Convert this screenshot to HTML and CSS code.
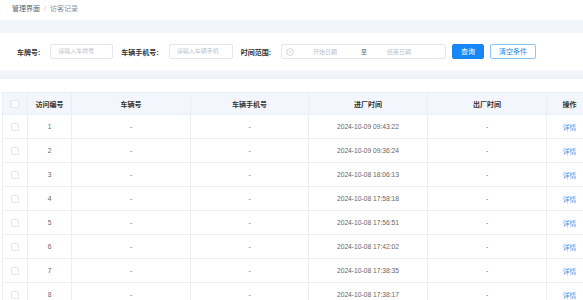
FILE: index.html
```html
<!doctype html>
<html>
<head>
<meta charset="utf-8">
<title>访客记录</title>
<link rel="stylesheet" href="styles.css">
</head>
<body>

<div class="crumb">
    <span class="crumb-item">管理界面</span><span class="crumb-sep">/</span><span class="crumb-item cur">访客记录</span>
</div>

<div class="band band-top"></div>

<div class="search">
    <label class="lab">车牌号:</label>
    <div class="ipt ipt-plate">请输入车牌号</div>
    <label class="lab">车辆手机号:</label>
    <div class="ipt ipt-phone">请输入车辆手机</div>
    <label class="lab">时间范围:</label>
    <div class="range">
        <svg class="clock" width="8" height="8" viewBox="0 0 10 10"><circle cx="5" cy="5" r="4.2" fill="none" stroke="#c0c4cc" stroke-width="0.9"/><path d="M5 2.6V5l1.6 1" fill="none" stroke="#c0c4cc" stroke-width="0.9"/></svg>
        <span class="range-txt">开始日期</span>
        <span class="range-sep">至</span>
        <span class="range-txt">结束日期</span>
    </div>
    <button class="btn btn-primary">查询</button>
    <button class="btn btn-plain">清空条件</button>
</div>

<div class="band band-bottom"></div>

<div class="table-wrap">
    <table class="grid">
        <colgroup>
            <col style="width:25px"><col style="width:44px"><col style="width:119px"><col style="width:118px"><col style="width:119px"><col style="width:119px"><col style="width:46px">
        </colgroup>
        <thead>
            <tr>
                <th><span class="chk"></span></th>
                <th>访问编号</th>
                <th>车辆号</th>
                <th>车辆手机号</th>
                <th>进厂时间</th>
                <th>出厂时间</th>
                <th>操作</th>
            </tr>
        </thead>
        <tbody id="rows"></tbody>
    </table>
</div>

<script>
var times = ['2024-10-09 09:43:22','2024-10-09 09:36:24','2024-10-08 18:06:13','2024-10-08 17:58:18','2024-10-08 17:56:51','2024-10-08 17:42:02','2024-10-08 17:38:35','2024-10-08 17:38:17'];
var html = '';
for (var i = 0; i < times.length; i++) {
    html += '<tr><td><span class="chk"></span></td><td>' + (i + 1) + '</td><td>-</td><td>-</td><td>' + times[i] + '</td><td>-</td><td><a class="link">详情</a></td></tr>';
}
document.getElementById('rows').innerHTML = html;
</script>

</body>
</html>
```

FILE: styles.css
```css
*{ margin: 0; padding: 0; box-sizing: border-box; }
html, body{ width: 583px; height: 300px; overflow: hidden; background: #fff; }
body{ font-family: "Liberation Sans", Arial, "Noto Sans CJK SC", sans-serif; font-size: 7px; color: #606266; }

/* 面包屑 */
.crumb{ height: 20px; padding: 4px 0 0 12px; font-size: 7px; line-height: 9px; color: #606266; }
.crumb-sep{ margin: 0 4px; color: #c0c4cc; }
.crumb .cur{ color: #8a8f99; }

.band{ background: #f2f6fb; }
.band-top{ height: 13px; }
.band-bottom{ height: 9px; background: linear-gradient(#f4f7fb, #edf2f8); }

/* 搜索区 */
.search{ height: 37px; display: flex; align-items: center; padding-left: 17px; }
.lab{ font-weight: bold; color: #333; font-size: 7px; margin-right: 10px; }
.ipt{ height: 15px; border: 1px solid #e4e7ed; border-radius: 2px; padding-left: 7px; font-size: 6px; line-height: 13px; color: #c0c4cc; margin-right: 8px; }
.ipt-plate{ width: 63px; }
.ipt-phone{ width: 64px; }
.range{ width: 165px; height: 15px; border: 1px solid #e4e7ed; border-radius: 2px; display: flex; align-items: center; padding-left: 4px; font-size: 6px; color: #c0c4cc; margin-left: 0; }
.clock{ display: block; margin-right: 19px; }
.range-txt{ width: 27px; }
.range-sep{ color: #606266; margin: 0 20px 0 21px; }
.btn{ height: 15px; border-radius: 2px; font-family: inherit; font-size: 7px; line-height: 13px; cursor: pointer; }
.btn-primary{ width: 32px; margin-left: 6px; background: #1787f5; border: 1px solid #1787f5; color: #fff; }
.btn-plain{ width: 46px; margin-left: 6px; background: #fff; border: 1px solid #8cc4f8; color: #2b8df0; }

/* 表格 */
.table-wrap{ padding: 13px 0 0 2px; }
.grid{ border-collapse: collapse; table-layout: fixed; width: 590px; }
.grid th, .grid td{ border: 1px solid #ebeef5; text-align: center; white-space: nowrap; }
.grid th{ height: 22px; background: #f3f6fc; color: #333; font-weight: bold; font-size: 7px; }
.grid td{ height: 24px; color: #666; font-size: 6.7px; }
.chk{ display: inline-block; width: 8px; height: 8px; border: 1px solid #e4e7ed; border-radius: 1px; background: #fff; vertical-align: middle; }
.grid th .chk{ border-color: #e4e7ed; }
.link{ color: #3a8ee6; cursor: pointer; }
```
